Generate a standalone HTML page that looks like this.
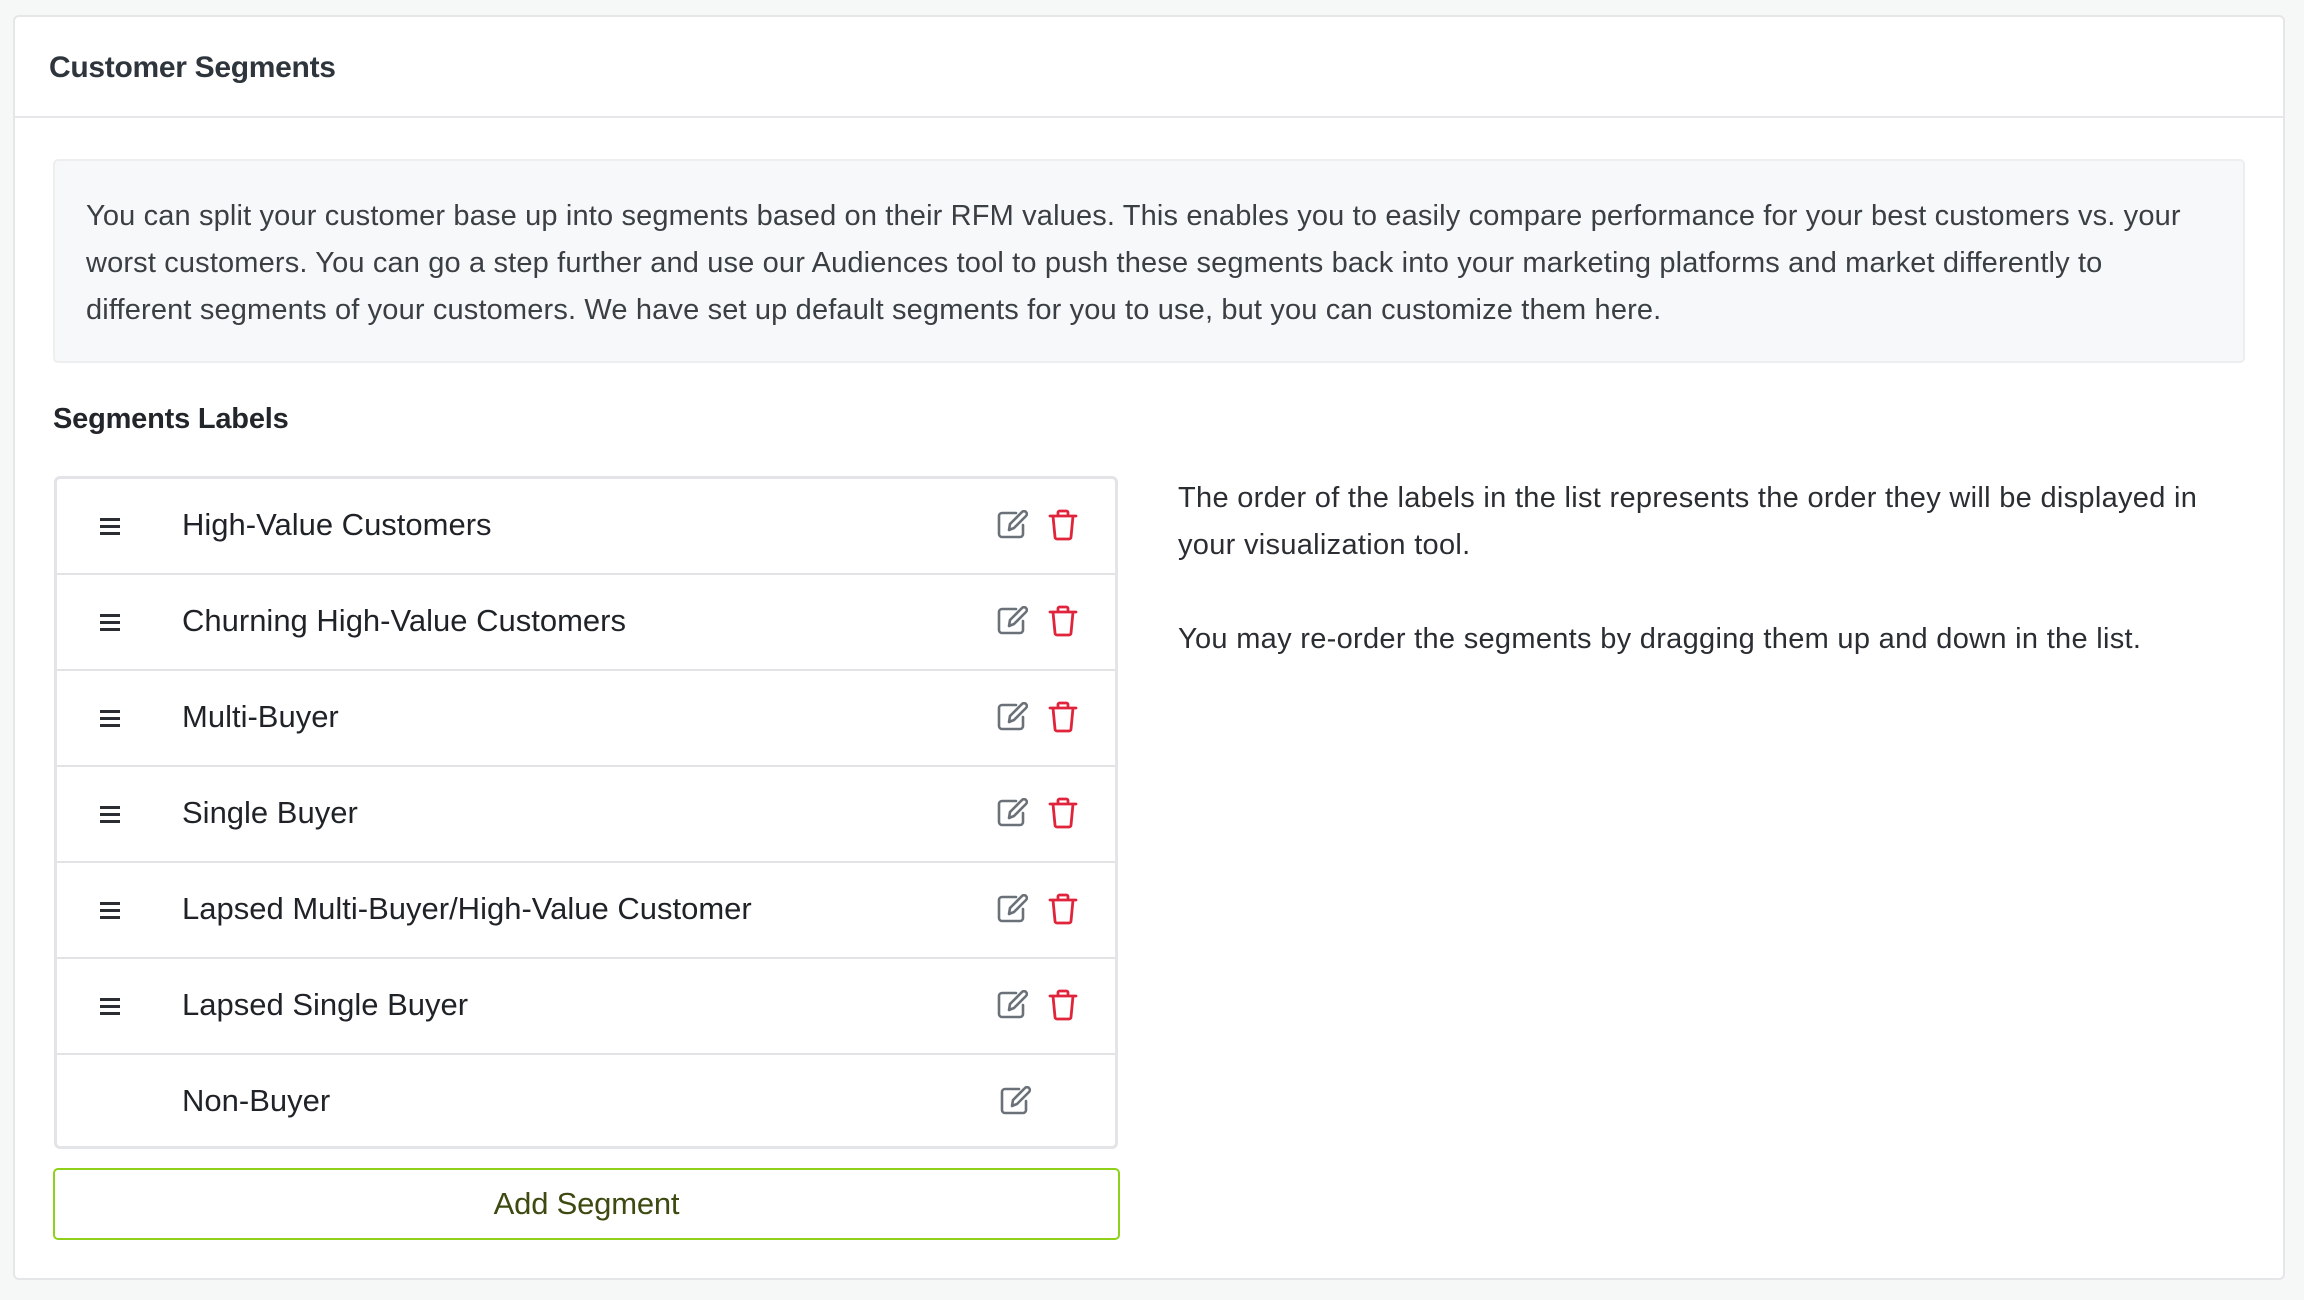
<!DOCTYPE html>
<html><head><meta charset="utf-8"><style>
*{box-sizing:border-box;margin:0;padding:0}
body{width:2304px;height:1300px;background:#f6f7f7;font-family:"Liberation Sans",sans-serif;color:#22262b;position:relative;overflow:hidden}
.card{position:absolute;left:13px;top:15px;width:2272px;height:1265px;background:#fff;border:2px solid #e4e6e8;border-radius:6px}
.hdr{position:absolute;left:0;top:0;right:0;height:101px;border-bottom:2px solid #e6e7e9}
.hdr h1{position:absolute;left:34px;top:34px;font-size:30px;font-weight:bold;color:#2e353c;letter-spacing:-0.3px}
.info{position:absolute;left:53px;top:159px;width:2192px;height:204px;background:#f7f8fa;border:2px solid #eceef0;border-radius:5px}
.info p{position:absolute;left:31px;top:32px;font-size:29px;line-height:47px;color:#3a3f44;white-space:nowrap;letter-spacing:0.15px}
.lbl{position:absolute;left:53px;top:403px;font-size:29px;font-weight:bold;color:#22262b;letter-spacing:-0.2px}
.list{position:absolute;left:54px;top:476px;width:1064px;height:673px;border:3px solid #e2e4e7;border-radius:6px;background:#fff}
.row{position:absolute;left:0;right:0;height:96px;border-bottom:2px solid #e2e3e5}
.row:last-child{border-bottom:none}
.ham{position:absolute;left:43px;top:39px;width:20px;height:17px;border-top:3px solid #2a2e33;border-bottom:3px solid #2a2e33}
.ham:after{content:"";position:absolute;left:0;right:0;top:4px;height:3px;background:#2a2e33}
.t{position:absolute;left:125px;top:28px;font-size:31px;color:#1f2328;white-space:nowrap;letter-spacing:0}
.ed{position:absolute;left:939px;top:31px}
.tr{position:absolute;left:990px;top:30px}
.btn{position:absolute;left:53px;top:1168px;width:1067px;height:72px;border:2px solid #8fd11a;border-radius:5px;text-align:center;line-height:68px;font-size:31px;color:#3d4a12;letter-spacing:-0.2px}
.rt{position:absolute;left:1178px;top:475px;font-size:29px;line-height:47px;color:#2a2e33;white-space:nowrap;letter-spacing:0.3px}
</style></head><body>
<div class="card">
<div class="hdr"><h1>Customer Segments</h1></div>
</div>
<div class="info"><p>You can split your customer base up into segments based on their RFM values. This enables you to easily compare performance for your best customers vs. your<br>worst customers. You can go a step further and use our Audiences tool to push these segments back into your marketing platforms and market differently to<br>different segments of your customers. We have set up default segments for you to use, but you can customize them here.</p></div>
<div class="lbl">Segments Labels</div>
<div class="list">
<svg width="0" height="0" style="position:absolute"><defs>
<g id="e"><path d="M20 3 H6 a3 3 0 0 0 -3 3 v18 a3 3 0 0 0 3 3 h18 a3 3 0 0 0 3 -3 V15" fill="none" stroke="#6b7178" stroke-width="2.6" stroke-linecap="round"/><path d="M13 20 l1 -6 L26 2 a2.5 2.5 0 0 1 4 4 L18 18 Z" fill="none" stroke="#6b7178" stroke-width="2.6" stroke-linejoin="round"/></g>
<g id="d"><path d="M3 7 H29 M11 7 V3.5 a1.5 1.5 0 0 1 1.5 -1.5 h7 a1.5 1.5 0 0 1 1.5 1.5 V7 M6 7 l2 21 a2 2 0 0 0 2 2 h12 a2 2 0 0 0 2 -2 l2 -21" fill="none" stroke="#e0243b" stroke-width="2.8" stroke-linejoin="round" stroke-linecap="round"/></g>
</defs></svg>
<div class="row" style="top:0"><div class="ham"></div><div class="t">High-Value Customers</div><svg class="ed" width="33" height="33"><use href="#e"/></svg><svg class="tr" width="32" height="33"><use href="#d"/></svg></div>
<div class="row" style="top:96px"><div class="ham"></div><div class="t">Churning High-Value Customers</div><svg class="ed" width="33" height="33"><use href="#e"/></svg><svg class="tr" width="32" height="33"><use href="#d"/></svg></div>
<div class="row" style="top:192px"><div class="ham"></div><div class="t">Multi-Buyer</div><svg class="ed" width="33" height="33"><use href="#e"/></svg><svg class="tr" width="32" height="33"><use href="#d"/></svg></div>
<div class="row" style="top:288px"><div class="ham"></div><div class="t">Single Buyer</div><svg class="ed" width="33" height="33"><use href="#e"/></svg><svg class="tr" width="32" height="33"><use href="#d"/></svg></div>
<div class="row" style="top:384px"><div class="ham"></div><div class="t">Lapsed Multi-Buyer/High-Value Customer</div><svg class="ed" width="33" height="33"><use href="#e"/></svg><svg class="tr" width="32" height="33"><use href="#d"/></svg></div>
<div class="row" style="top:480px"><div class="ham"></div><div class="t">Lapsed Single Buyer</div><svg class="ed" width="33" height="33"><use href="#e"/></svg><svg class="tr" width="32" height="33"><use href="#d"/></svg></div>
<div class="row" style="top:576px;border-bottom:none"><div class="t">Non-Buyer</div><svg class="ed" width="33" height="33" style="left:942px"><use href="#e"/></svg></div>
</div>
<div class="btn">Add Segment</div>
<div class="rt">The order of the labels in the list represents the order they will be displayed in<br>your visualization tool.<br><br>You may re-order the segments by dragging them up and down in the list.</div>
</body></html>
